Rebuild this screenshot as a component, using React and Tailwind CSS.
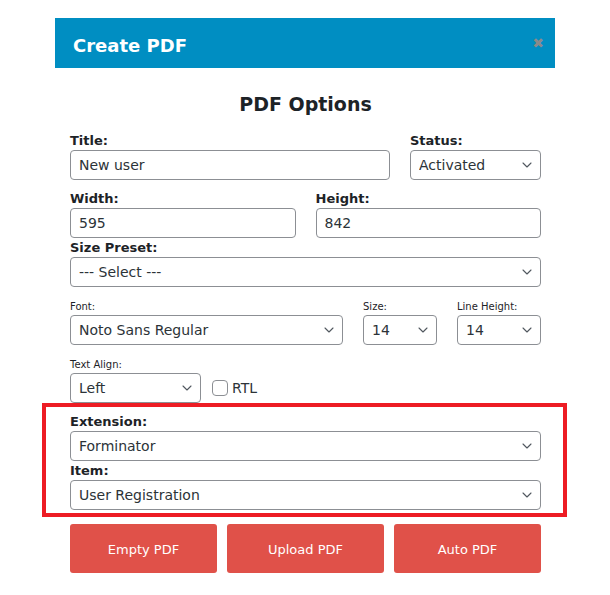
import React from 'react';
import { ChevronDown } from 'lucide-react';

const Label = ({ children, small }) => (
    <label
        className={
            small
                ? 'block text-[10px] leading-[16px] text-[#1d2327] mt-[12px]'
                : 'block text-[13px] font-bold leading-[19px] text-[#1d2327]'
        }
    >
        {children}
    </label>
);

const Select = ({ value, className = '' }) => (
    <div className={`relative h-[30px] ${className}`}>
        <select
            defaultValue={value}
            className="w-full h-full appearance-none rounded-[4px] border border-[#8c8f94] bg-white pl-[8px] pr-6 text-[14px] text-[#2c3338] outline-none"
        >
            <option>{value}</option>
        </select>
        <ChevronDown
            size={16}
            strokeWidth={1.6}
            className="pointer-events-none absolute right-[6px] top-[7px] text-[#50575e]"
        />
    </div>
);

const Input = ({ value }) => (
    <input
        defaultValue={value}
        className="w-full h-[30px] rounded-[4px] border border-[#8c8f94] bg-white px-[8px] text-[14px] text-[#2c3338] outline-none"
    />
);

const App = () => {
    return (
        <div
            className="w-[610px] h-[595px] bg-white pt-[18px] overflow-hidden"
            style={{ fontFamily: '"DejaVu Sans", Verdana, sans-serif' }}
        >
            <div className="ml-[55px] w-[500px] bg-white">
                {/* Header */}
                <div className="h-[50px] bg-[#008ec2] flex items-center justify-between pl-[18px] pr-[11px]">
                    <h2 className="pt-[5px] text-[18px] font-bold text-white">Create PDF</h2>
                    <span className="text-[#8a8a8a] text-[14px] font-bold leading-none">✖</span>
                </div>

                <div className="pl-[15px] pr-[14px]">
                    <h1 className="mt-[22px] mb-[13px] text-center text-[19px] font-bold leading-[28px] text-[#1d2327]">
                        PDF Options
                    </h1>

                    <div className="flex gap-5">
                        <div className="flex-1">
                            <Label>Title:</Label>
                            <Input value="New user" />
                        </div>
                        <div className="w-[131px]">
                            <Label>Status:</Label>
                            <Select value="Activated" />
                        </div>
                    </div>

                    <div className="grid grid-cols-2 gap-5 mt-[9px]">
                        <div>
                            <Label>Width:</Label>
                            <Input value="595" />
                        </div>
                        <div>
                            <Label>Height:</Label>
                            <Input value="842" />
                        </div>
                    </div>

                    <Label>Size Preset:</Label>
                    <Select value="--- Select ---" />

                    <div className="flex gap-5">
                        <div className="flex-1">
                            <Label small>Font:</Label>
                            <Select value="Noto Sans Regular" />
                        </div>
                        <div className="w-[74px]">
                            <Label small>Size:</Label>
                            <Select value="14" />
                        </div>
                        <div className="w-[84px]">
                            <Label small>Line Height:</Label>
                            <Select value="14" />
                        </div>
                    </div>

                    <Label small>Text Align:</Label>
                    <div className="flex items-center gap-[11px]">
                        <Select value="Left" className="w-[131px]" />
                        <label className="flex items-center gap-[4px] text-[14px] text-[#2c3338]">
                            <span className="w-[16px] h-[16px] rounded-[4px] border border-[#8c8f94] bg-white" />
                            RTL
                        </label>
                    </div>

                    {/* Highlighted section */}
                    <div className="-ml-[28px] -mr-[26px] border-4 border-[#ed1c24] pl-[24px] pr-[22px] pt-[5px] pb-[3px]">
                        <Label>Extension:</Label>
                        <Select value="Forminator" />
                        <Label>Item:</Label>
                        <Select value="User Registration" />
                    </div>

                    <div className="mt-[7px] flex gap-[10px]">
                        <button className="w-[147px] h-[49px] pt-[3px] rounded-[3px] bg-[#e05149] text-white text-[13px]">
                            Empty PDF
                        </button>
                        <button className="w-[157px] h-[49px] pt-[3px] rounded-[3px] bg-[#e05149] text-white text-[13px]">
                            Upload PDF
                        </button>
                        <button className="flex-1 h-[49px] pt-[3px] rounded-[3px] bg-[#e05149] text-white text-[13px]">
                            Auto PDF
                        </button>
                    </div>
                </div>
            </div>
        </div>
    );
};

export default App;
